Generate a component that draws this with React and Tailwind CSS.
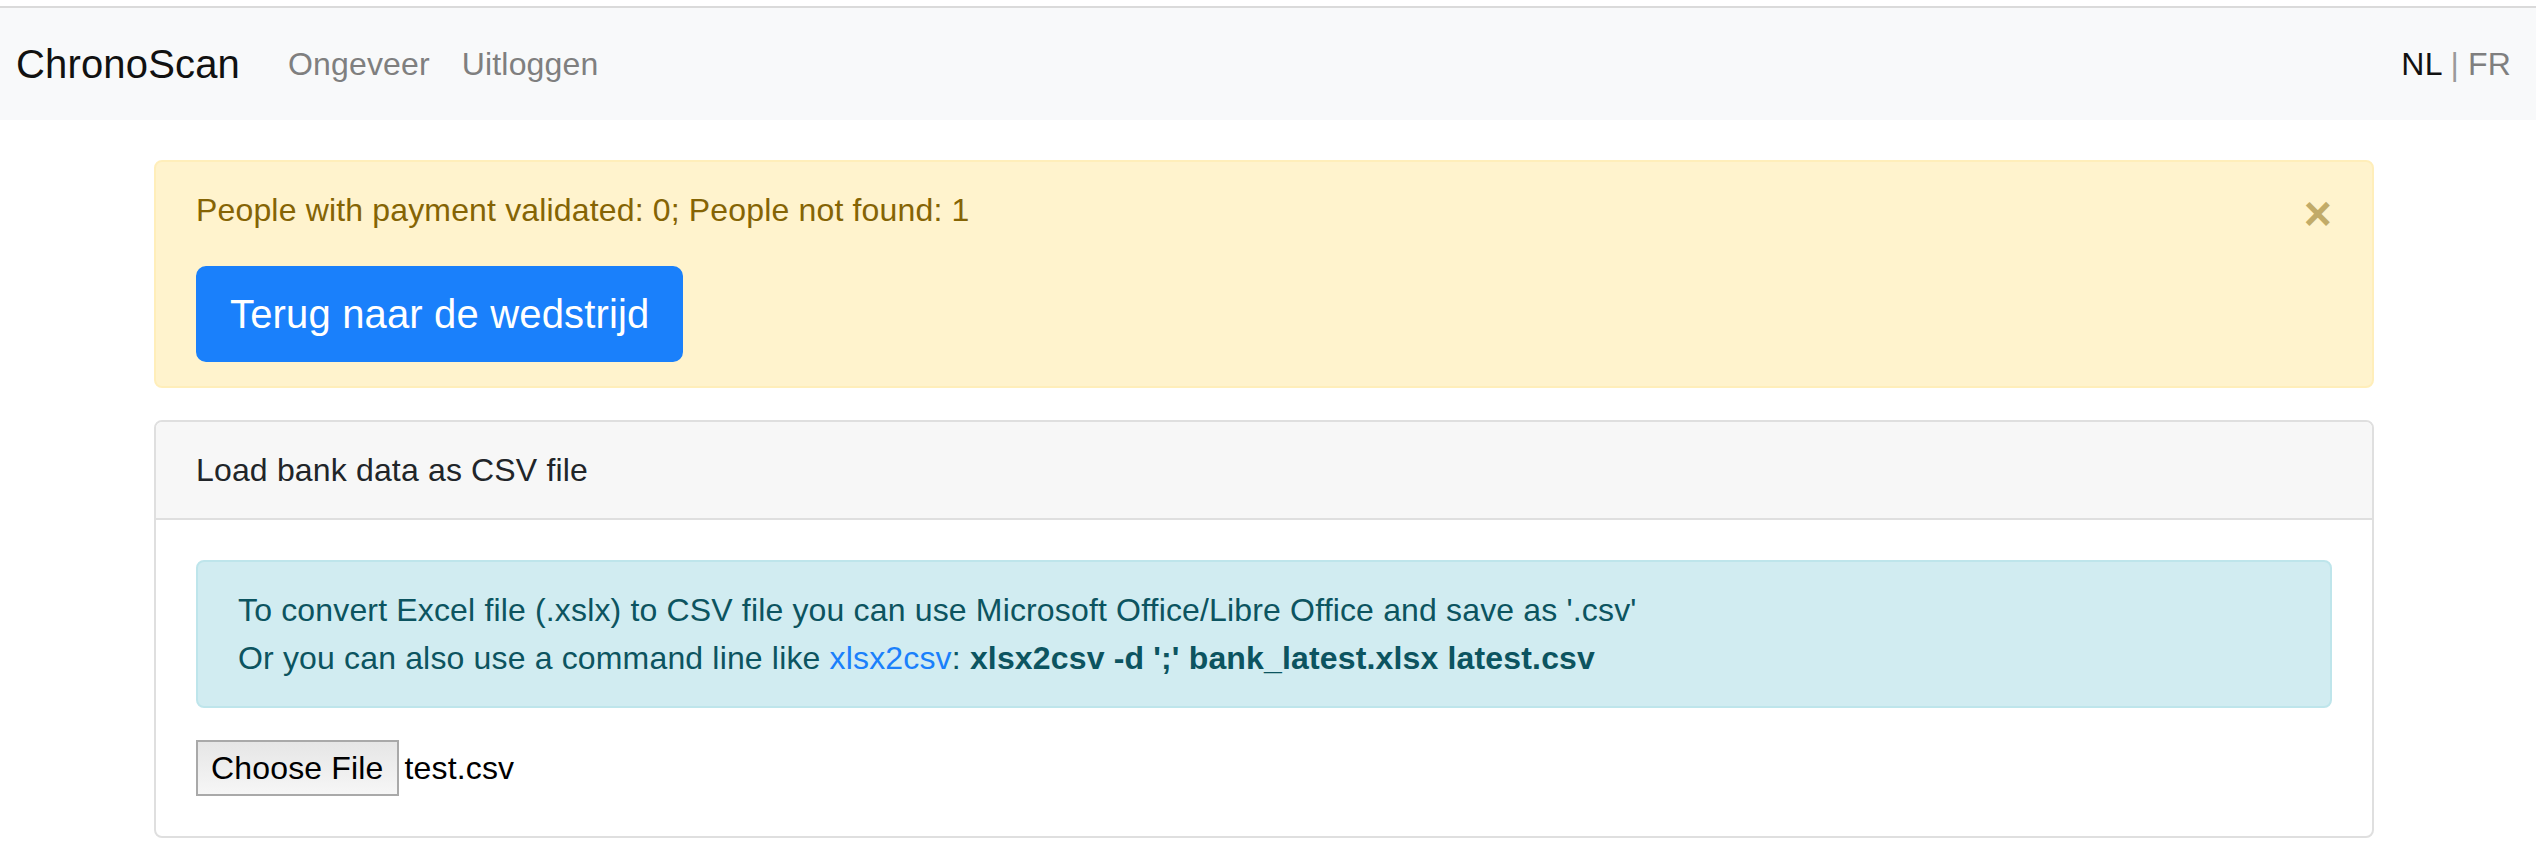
import React from 'react';

const font = { fontFamily: '"Liberation Sans", Arial, sans-serif' };

const Navbar = () => (
  <nav className="flex items-center justify-between border-t-2 border-[#dadada] bg-[#f8f9fa] pl-[16px] pr-[25px] py-[16px]">
    <div className="flex items-center">
      <a className="mr-[32px] py-[10px] text-[40px] leading-[60px] text-[#111]">ChronoScan</a>
      <a className="px-[16px] py-[16px] text-[32px] leading-[48px] text-[#7f7f7f]">Ongeveer</a>
      <a className="px-[16px] py-[16px] text-[32px] leading-[48px] text-[#7f7f7f]">Uitloggen</a>
    </div>
    <div className="text-[32px] leading-[48px]">
      <span className="text-[#111]">NL</span> <span className="text-[#9a9a9a]">|</span>{' '}
      <span className="text-[#7f7f7f]">FR</span>
    </div>
  </nav>
);

const WarningAlert = () => (
  <div className="relative rounded-[8px] border-2 border-[#ffeeba] bg-[#fff3cd] pl-[40px] pr-[128px] py-[24px] text-[#856404]">
    <p className="mb-[32px] text-[32px] leading-[48px]">
      People with payment validated: 0; People not found: 1
    </p>
    <button className="rounded-[10px] border-2 border-[#1a80fb] bg-[#1a80fb] px-[32px] py-[16px] text-[40px] leading-[60px] text-white">
      Terug naar de wedstrijd
    </button>
    <button className="absolute right-0 top-0 px-[40px] pt-[28px] text-[48px] font-bold leading-none text-[#c2ab68]">
      ×
    </button>
  </div>
);

const UploadCard = () => (
  <div className="mt-[32px] overflow-hidden rounded-[8px] border-2 border-[#dfdfdf] text-[32px] leading-[48px] text-[#212529]">
    <div className="border-b-2 border-[#dfdfdf] bg-[#f7f7f7] px-[40px] py-[24px]">
      Load bank data as CSV file
    </div>
    <div className="p-[40px]">
      {/* conversion hint */}
      <div className="mb-[32px] rounded-[8px] border-2 border-[#bee5eb] bg-[#d1ecf1] px-[40px] py-[24px] text-[#0c5460]">
        To convert Excel file (.xslx) to CSV file you can use Microsoft Office/Libre Office and save as '.csv'
        <br />
        Or you can also use a command line like <a className="text-[#1a80fb]">xlsx2csv</a>:{' '}
        <b className="font-bold">xlsx2csv -d ';' bank_latest.xlsx latest.csv</b>
      </div>

      {/* file picker */}
      <div className="flex items-center">
        <span className="flex h-[56px] items-center border-2 border-[#a9a9a9] bg-gradient-to-b from-[#e6e6e6] to-[#f6f6f6] px-[13px] text-[32px] text-black">
          Choose File
        </span>
        <span className="ml-[6px] text-[32px] text-black">test.csv</span>
      </div>
    </div>
  </div>
);

export default function App() {
  return (
    <div className="min-h-screen bg-white pt-[6px] tracking-[0.01em]" style={font}>
      <Navbar />
      <div className="pr-[8px]">
        <div className="mx-auto w-[2280px] px-[30px] pt-[40px]">
          <WarningAlert />
          <UploadCard />
        </div>
      </div>
    </div>
  );
}
